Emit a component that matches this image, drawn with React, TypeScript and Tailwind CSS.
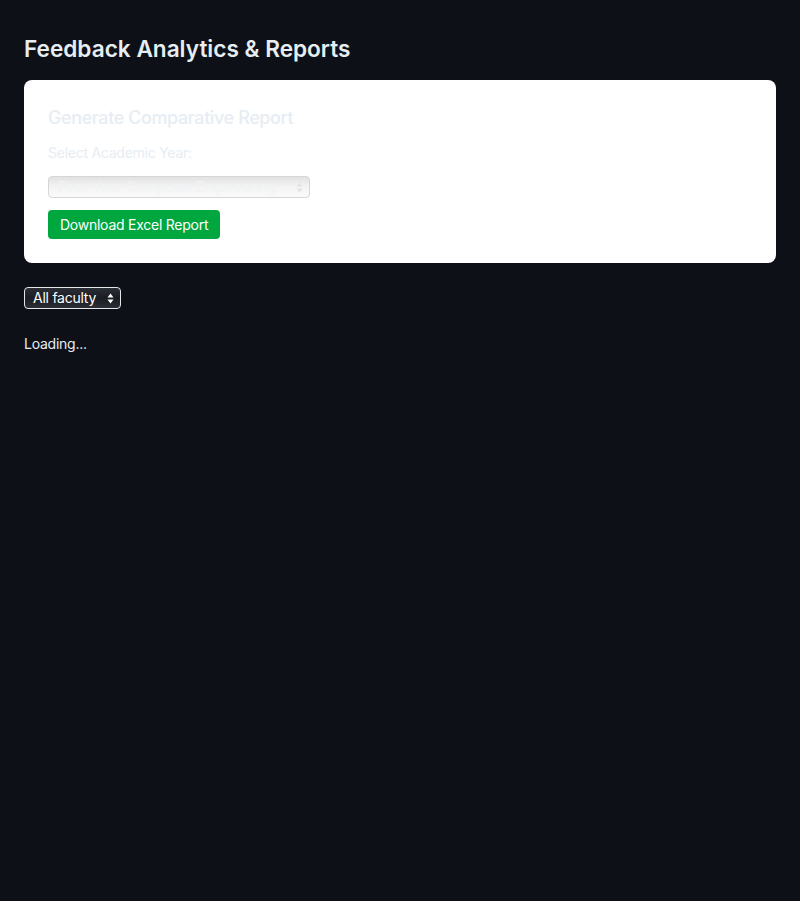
import React from "react";

function Arrows({ color }: { color: string }) {
  return (
    <svg width="7" height="11" viewBox="0 0 7 11" className="shrink-0">
      <path d="M3.5 0.5 L6.5 4.5 L0.5 4.5 Z" fill={color} />
      <path d="M3.5 10.5 L6.5 6.5 L0.5 6.5 Z" fill={color} />
    </svg>
  );
}

export default function App() {
  return (
    <div
      className="min-h-[901px] bg-[#0d1117] px-6 pt-[35px] text-[#e6edf3] tracking-[-0.25px]"
      style={{ fontFamily: "Inter, 'Noto Sans', sans-serif" }}
    >
      <h1 className="text-[22.6px] leading-[28px] font-semibold tracking-normal text-[#e6edf3]">
        Feedback Analytics &amp; Reports
      </h1>
      <div className="mt-[17px] rounded-lg bg-white p-6">
        <h2 className="text-[18px] leading-[28px] font-medium tracking-[-0.4px] text-[#e6edf3]">
          Generate Comparative Report
        </h2>
        <div className="mt-[11px] text-[14px] leading-[20px] text-[#e6edf3]">
          Select Academic Year:
        </div>
        <div className="mt-[13px] flex h-[22px] w-[262px] items-center justify-between overflow-hidden rounded-[4px] border border-[#d6d6d6] bg-gradient-to-b from-[#e2e2e2] via-[#f4f4f4] to-[#fafafa] pl-[9px] pr-[6px]">
          <span className="whitespace-nowrap text-[14px] leading-[20px] tracking-[0.1px] text-[#f1f3f5]">
            First Year Computer Engineering
          </span>
          <Arrows color="#e4e4e4" />
        </div>
        <button className="mt-3 flex h-[29px] items-center rounded-[4px] bg-[#00a63e] px-3 text-[14px] text-white">
          Download Excel Report
        </button>
      </div>
      <div className="mt-6 flex h-[22px] w-[97px] items-center justify-between rounded-[4px] border border-[#e6e6e6] bg-gradient-to-b from-[#2b2f35] via-[#1a1e24] to-[#2b2f35] pl-[8px] pr-[6px]">
        <span className="whitespace-nowrap text-[14px] leading-[20px] text-white">All faculty</span>
        <Arrows color="#ffffff" />
      </div>
      <div className="mt-[25px] text-[14px] leading-[20px] text-[#e6edf3]">Loading...</div>
    </div>
  );
}
